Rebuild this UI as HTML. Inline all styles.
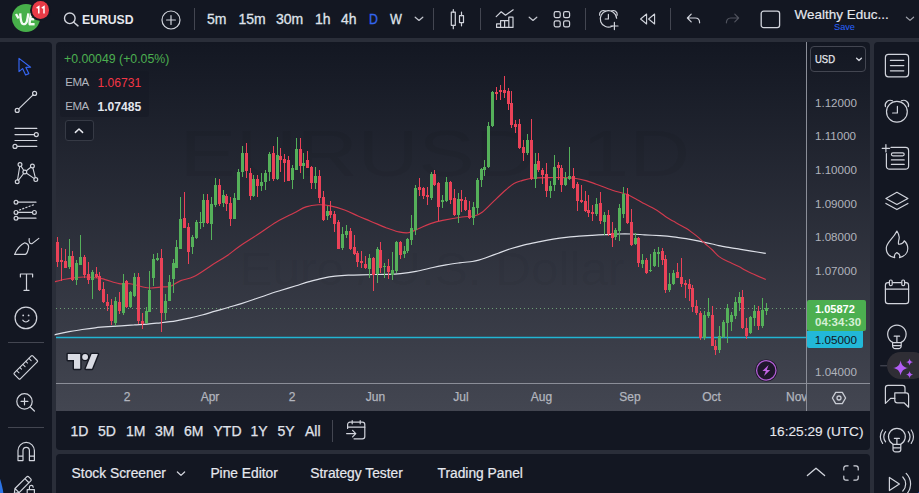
<!DOCTYPE html>
<html>
<head>
<meta charset="utf-8">
<title>EURUSD chart</title>
<style>
html,body{margin:0;padding:0;}
body{width:919px;height:493px;overflow:hidden;background:#2a2e39;font-family:"Liberation Sans",sans-serif;color:#d1d4dc;position:relative;}
.abs{position:absolute;}
.panel{position:absolute;background:#131722;}
.t{position:absolute;white-space:nowrap;line-height:1;}
svg{position:absolute;overflow:visible;}
.ic{fill:none;stroke:#d1d4dc;stroke-width:1.2;stroke-linecap:round;stroke-linejoin:round;}

.pa{font-size:11.6px;color:#b0b3bc;margin-top:-0.3px;}
.ta{top:391px;font-size:12px;color:#b2b5be;-webkit-text-stroke:0.25px #b2b5be;transform:translateX(-50%);}
.dr{top:424px;font-size:14px;color:#e0e3eb;-webkit-text-stroke:0.25px #e0e3eb;}
.bp{top:467px;font-size:13.8px;color:#e6e8ee;-webkit-text-stroke:0.2px #e6e8ee;}
.tf{-webkit-text-stroke:0.3px;color:#dfe2ea;}
</style>
</head>
<body>
<!-- ===== TOP TOOLBAR ===== -->
<div class="panel" id="top" style="left:0;top:0;width:919px;height:38px;"></div>
<!-- ===== LEFT TOOLBAR ===== -->
<div class="panel" id="left" style="left:0;top:42px;width:52px;height:451px;border-top-right-radius:4px;"></div>
<!-- ===== RIGHT TOOLBAR ===== -->
<div class="panel" id="right" style="left:874px;top:42px;width:45px;height:451px;border-top-left-radius:4px;"></div>
<!-- ===== CHART ===== -->
<div class="abs" id="chart" style="left:56px;top:42px;width:814px;height:369px;background:linear-gradient(180deg,#131722 0%,#434651 100%);border-radius:4px 4px 0 0;"></div>
<!-- ===== DATE RANGE BAR ===== -->
<div class="panel" id="range" style="left:56px;top:411px;width:814px;height:38.6px;border-radius:0 0 4px 4px;"></div>
<!-- ===== BOTTOM PANEL ===== -->
<div class="panel" id="bottom" style="left:56px;top:454px;width:814px;height:39px;border-radius:4px 4px 0 0;"></div>


<!-- top toolbar content -->
<div class="abs" style="left:12px;top:4px;width:28px;height:28px;border-radius:50%;background:#47b04a;"></div>
<svg width="28" height="28" viewBox="0 0 28 28" style="left:12px;top:4px;">
  <g fill="none" stroke="#f4fbf4" stroke-width="2.4" stroke-linecap="butt" stroke-linejoin="round">
    <path d="M4 10 L6.6 14.4"/>
    <path d="M8.2 9.4 C8.4 14 8.6 18.6 10.6 19.8 C12.6 20.8 14.4 19.6 15 17 C15.6 14.6 16 12 16.4 9.4"/>
    <path d="M19.4 9.4 C18.4 13 17.4 17 17.6 20.6"/>
    <path d="M18.6 10.4 H23.4"/>
    <path d="M17.8 15.2 H22.2"/>
    <path d="M17 20.2 H22.6"/>
  </g>
</svg>
<div class="abs" style="left:30px;top:-0.5px;width:21px;height:21px;border-radius:50%;background:#131722;"></div>
<div class="abs" style="left:31.8px;top:1.2px;width:17.6px;height:17.6px;border-radius:50%;background:#e83b46;"></div>
<svg width="18" height="18" viewBox="0 0 18 18" style="left:31.8px;top:1.2px;">
  <path d="M4.6 7.2 L6.8 5.6 V12.6 M9.8 7.2 L12 5.6 V12.6" fill="none" stroke="#fff" stroke-width="1.5" stroke-linejoin="miter"/>
</svg>

<svg width="20" height="20" viewBox="0 0 20 20" style="left:61px;top:9px;">
  <circle cx="8.8" cy="9.3" r="5.3" class="ic" style="stroke-width:1.4"/>
  <path d="M12.7 13.2 L17 16.9" class="ic" style="stroke-width:1.4"/>
</svg>
<div class="t" id="sym" style="left:82.3px;top:12.7px;font-size:13.5px;font-weight:bold;color:#e6e8ee;transform:scaleX(0.905);transform-origin:0 0;">EURUSD</div>
<svg width="22" height="22" viewBox="0 0 22 22" style="left:159.5px;top:8.5px;">
  <circle cx="11" cy="11" r="9" class="ic" style="stroke-width:1.2"/>
  <path d="M11 6.6 V15.4 M6.6 11 H15.4" class="ic" style="stroke-width:1.2"/>
</svg>
<div class="abs sep" style="left:194px;top:8px;width:1px;height:22px;background:#434651;"></div>
<div class="t tf" style="left:207px;top:12px;font-size:14px;">5m</div>
<div class="t tf" style="left:238.5px;top:12px;font-size:14px;">15m</div>
<div class="t tf" style="left:276px;top:12px;font-size:14px;">30m</div>
<div class="t tf" style="left:315px;top:12px;font-size:14px;">1h</div>
<div class="t tf" style="left:341px;top:12px;font-size:14px;">4h</div>
<div class="t tf" style="left:368.7px;top:12px;font-size:14px;color:#3366f0;transform:scaleX(0.88);transform-origin:0 0;">D</div>
<div class="t tf" style="left:389.7px;top:12px;font-size:14px;transform:scaleX(0.9);transform-origin:0 0;">W</div>
<svg width="12" height="8" viewBox="0 0 12 8" style="left:412.5px;top:14.5px;"><path d="M2.2 2.2 L6 5.4 L9.8 2.2" class="ic" style="stroke-width:1.25;stroke:#c3c6ce"/></svg>
<div class="abs sep" style="left:433px;top:8px;width:1px;height:22px;background:#434651;"></div>
<!-- candles icon -->
<svg width="20" height="24" viewBox="0 0 20 24" style="left:447px;top:7px;">
  <path d="M6.3 2.6 V5.2 M6.3 18.3 V21.7 M14.5 5.2 V8.7 M14.5 15.6 V18.8" class="ic" style="stroke-width:1.2"/>
  <rect x="4.3" y="5.2" width="4" height="13.1" class="ic" style="stroke-width:1.2"/>
  <rect x="12.5" y="8.7" width="4" height="6.9" class="ic" style="stroke-width:1.2"/>
</svg>
<div class="abs sep" style="left:480px;top:8px;width:1px;height:22px;background:#434651;"></div>
<!-- indicators icon -->
<svg width="22" height="22" viewBox="0 0 22 22" style="left:494px;top:8px;">
  <path d="M2.2 8.6 L7.2 3.8 L11.5 7.2 L19.2 1.8" class="ic" style="stroke-width:1.2"/>
  <path d="M2.6 19.4 H19 V9.2 H14.8 V19.4 M14.8 12.6 H10.6 V19.4 M10.6 12.6 H6.6 V19.4 M6.6 15.8 H2.6 V19.4" class="ic" style="stroke-width:1.2"/>
</svg>
<svg width="12" height="8" viewBox="0 0 12 8" style="left:527px;top:14.5px;"><path d="M2.2 2.2 L6 5.4 L9.8 2.2" class="ic" style="stroke-width:1.25;stroke:#c3c6ce"/></svg>
<!-- layout icon -->
<svg width="20" height="20" viewBox="0 0 20 20" style="left:553px;top:10px;">
  <rect x="1.2" y="1.6" width="6" height="6" rx="1.6" class="ic" style="stroke-width:1.2"/>
  <rect x="10.6" y="1.6" width="6" height="6" rx="1.6" class="ic" style="stroke-width:1.2"/>
  <rect x="1.2" y="10.8" width="6" height="6" rx="1.6" class="ic" style="stroke-width:1.2"/>
  <rect x="10.6" y="10.8" width="6" height="6" rx="1.6" class="ic" style="stroke-width:1.2"/>
</svg>
<div class="abs sep" style="left:585px;top:8px;width:1px;height:22px;background:#434651;"></div>
<!-- alert icon -->
<svg width="24" height="24" viewBox="0 0 24 24" style="left:597px;top:7px;">
  <path d="M15.2 19.2 A8.2 8.2 0 1 1 19.6 11.2" class="ic" style="stroke-width:1.2"/>
  <path d="M11.4 7.4 V12 H8.2" class="ic" style="stroke-width:1.2"/>
  <path d="M2.6 8.2 A4 4 0 0 1 8.4 4 M14.4 4 A4 4 0 0 1 20.2 8.2" class="ic" style="stroke-width:1.2"/>
  <path d="M17.4 15.4 V22.6 M13.8 19 H21" class="ic" style="stroke-width:1.2"/>
</svg>
<!-- replay icon -->
<svg width="18" height="14" viewBox="0 0 18 14" style="left:639px;top:12px;">
  <path d="M7.6 2 V12 L1.6 7 Z M15.6 2 V12 L9.6 7 Z" class="ic" style="stroke-width:1.1"/>
</svg>
<div class="abs sep" style="left:670px;top:8px;width:1px;height:22px;background:#434651;"></div>
<!-- undo / redo -->
<svg width="16" height="12" viewBox="0 0 16 12" style="left:686px;top:13px;">
  <path d="M5.2 1.2 L1.4 5 L5.2 8.8 M1.6 5 H9.2 C12.2 5 13.6 7 13.6 9.8" class="ic" style="stroke-width:1.2"/>
</svg>
<svg width="16" height="12" viewBox="0 0 16 12" style="left:723.5px;top:13px;">
  <path d="M10.8 1.2 L14.6 5 L10.8 8.8 M14.4 5 H6.8 C3.8 5 2.4 7 2.4 9.8" class="ic" style="stroke:#50535e;stroke-width:1.2"/>
</svg>
<!-- save square -->
<svg width="22" height="20" viewBox="0 0 22 20" style="left:760px;top:10px;">
  <rect x="1.2" y="1.2" width="18.4" height="16.4" rx="2.4" class="ic" style="stroke-width:1.3"/>
</svg>
<div class="t" id="wealthy" style="left:794.5px;top:7.5px;font-size:13.5px;color:#e6e8ee;-webkit-text-stroke:0.15px #e6e8ee;">Wealthy Educ...</div>
<div class="t" id="save" style="left:834px;top:22.5px;font-size:9.2px;color:#2962ff;">Save</div>
<svg width="12" height="8" viewBox="0 0 12 8" style="left:904px;top:15px;"><path d="M2.4 2.2 L6 5.4 L9.6 2.2" class="ic" style="stroke-width:1.2;stroke:#9da0a9"/></svg>


<!-- left toolbar icons (page coords) -->
<svg id="leftsvg" width="56" height="493" viewBox="0 0 56 493" style="left:0;top:0;">
  <!-- cursor -->
  <path d="M19 58.4 V71.6 L22.6 68.6 L25.6 75 L28.8 73.6 L25.9 67.4 L30.6 67.2 Z" class="ic" style="stroke:#3567f5;stroke-width:1.15"/>
  <!-- trend line -->
  <circle cx="34.6" cy="93.4" r="2" class="ic"/><circle cx="17.2" cy="110.4" r="2" class="ic"/>
  <path d="M18.7 108.9 L33.1 94.9" class="ic"/>
  <!-- fib lines -->
  <path d="M15 128.4 H36.8 M15 134.6 H34.2 M15 140.5 H36.8 M17.2 146.4 H36.8" class="ic"/>
  <circle cx="36.3" cy="134.6" r="2" class="ic" style="fill:#131722"/><circle cx="15" cy="146.4" r="2" class="ic" style="fill:#131722"/>
  <!-- pattern -->
  <path d="M17.2 181.8 L20 164.6 L24.8 172 L32.4 166 L35.8 179.6 L24.8 172 Z" class="ic" style="stroke-width:1.1"/>
  <circle cx="20" cy="164.6" r="1.9" class="ic" style="fill:#131722"/><circle cx="32.4" cy="166" r="1.9" class="ic" style="fill:#131722"/>
  <circle cx="24.8" cy="172" r="1.9" class="ic" style="fill:#131722"/><circle cx="17.2" cy="181.8" r="1.9" class="ic" style="fill:#131722"/>
  <circle cx="35.8" cy="179.6" r="1.9" class="ic" style="fill:#131722"/>
  <!-- forecast -->
  <path d="M18 202.2 H36 M18 212.4 H32.4 M18 218.2 H36" class="ic"/>
  <path d="M19.5 210 L33.5 204.8" class="ic" style="stroke-dasharray:1.2,2.2"/>
  <circle cx="16" cy="202.2" r="1.9" class="ic"/><circle cx="16" cy="212.4" r="1.9" class="ic"/><circle cx="16" cy="218.2" r="1.9" class="ic"/>
  <circle cx="34.4" cy="212.4" r="1.9" class="ic"/>
  <!-- brush -->
  <path d="M14.6 254.4 C17 249 20.5 244.6 24.8 242.8 C27.6 243.4 28.8 245 28.6 247.4 C28 251 27 253.8 25.4 254.4 Z" class="ic"/>
  <path d="M29.2 238.6 C28.6 242.4 30.2 244.6 32.4 243.4 L38.8 238.4" class="ic"/>
  <!-- text T -->
  <path d="M20.4 277 V274 H32.6 V277 M26.5 274 V290.4 M24 290.4 H29" class="ic"/>
  <!-- smiley -->
  <circle cx="25.9" cy="317.9" r="10.8" class="ic"/>
  <circle cx="23.2" cy="315.4" r="0.9" fill="#d1d4dc"/><circle cx="28.6" cy="315.4" r="0.9" fill="#d1d4dc"/>
  <path d="M22.8 320.2 C24.4 322.6 27.4 322.6 29 320.2" class="ic"/>
  <path d="M8 342.5 H44" stroke="#434651" stroke-width="1"/>
  <!-- ruler -->
  <g transform="translate(25.8,367.4) rotate(-45)">
    <rect x="-13" y="-4.2" width="26" height="8.4" rx="1" class="ic"/>
    <path d="M-8.6 -4.2 V-1 M-4.3 -4.2 V-1.8 M0 -4.2 V-1 M4.3 -4.2 V-1.8 M8.6 -4.2 V-1" class="ic" style="stroke-width:1"/>
  </g>
  <!-- zoom -->
  <circle cx="24.5" cy="401.4" r="7.7" class="ic"/>
  <path d="M30.2 407 L34.4 411 M24.5 398 V404.8 M21.1 401.4 H27.9" class="ic"/>
  <path d="M8 427.5 H44" stroke="#434651" stroke-width="1"/>
  <!-- magnet -->
  <path d="M18 460.6 V450.6 A8.2 8.2 0 0 1 34.4 450.6 V460.6 H29.4 V450.6 A3.2 3.2 0 0 0 23 450.6 V460.6 Z M18 456.2 H23 M29.4 456.2 H34.4" class="ic"/>
  <!-- pencil + lock -->
  <g transform="translate(22.4,485.2) rotate(-45)">
    <path d="M-11.4 0 L-7.6 -2.9 H8.6 A1.8 1.8 0 0 1 10.4 -1.1 V1.1 A1.8 1.8 0 0 1 8.6 2.9 H-7.6 Z M6.4 -2.9 V2.9 M-7.6 -2.9 V2.9" class="ic"/>
  </g>
  <rect x="26" y="487.6" width="10" height="7" fill="#131722"/>
  <path d="M27.2 493.4 V489.6 H34.4 V493.4 M29.4 489.6 V487.4 A1.9 1.9 0 0 1 33.2 487.2" class="ic"/>
  <!-- blue arc -->
  <circle cx="-80" cy="505" r="84.2" fill="#2c74e6"/>
</svg>


<!-- right toolbar icons (page coords) -->
<div class="abs" style="left:887px;top:352px;width:40px;height:27px;border-radius:13.5px;background:#2f2e35;"></div>
<svg id="rightsvg" width="919" height="493" viewBox="0 0 919 493" style="left:0;top:0;">
  <!-- watchlist -->
  <rect x="885.4" y="54.4" width="23.2" height="22.4" rx="3" class="ic"/>
  <path d="M890.4 60.4 H903.8 M890.4 65.6 H903.8 M890.4 70.8 H903.8" class="ic"/>
  <!-- alarm -->
  <circle cx="896.9" cy="111.8" r="10.4" class="ic"/>
  <path d="M897.4 106.4 V113 H892.6" class="ic"/>
  <path d="M885.4 106.6 A5 5 0 0 1 892.4 100.8 M901.4 100.8 A5 5 0 0 1 908.4 106.6" class="ic"/>
  <!-- list plus -->
  <path d="M891 147.4 H905.6 A3 3 0 0 1 908.6 150.4 V166.2 A3 3 0 0 1 905.6 169.2 H889.4 A3 3 0 0 1 886.4 166.2 V153.6" class="ic"/>
  <path d="M885.9 144.6 V152 M882.2 148.3 H889.6" class="ic"/>
  <rect x="891.4" y="152.8" width="12.8" height="3" rx="1.5" class="ic"/>
  <path d="M891.4 159.9 H904.2 M891.4 164.4 H904.2" class="ic"/>
  <!-- layers -->
  <path d="M885.9 198.4 L896.9 192.3 L907.9 198.4 L896.9 204.5 Z" class="ic"/>
  <path d="M885.9 203.4 L896.9 209.6 L907.9 203.4" class="ic"/>
  <!-- flame -->
  <path d="M896.9 231 C898.6 233.6 899.6 236.2 899.1 238.6 C898.8 240.6 898 242.4 898.6 244.2 C901 244.4 903.4 243 904.3 240.8 C906.6 243 907.8 245.6 907.8 248.5 C907.8 252.6 904.6 256.4 899.5 257.7 C900.4 255.6 899 253.6 896.9 252.6 C895 253.8 894 255.8 894.7 257.7 C889.6 256.6 886.2 253 886.3 248 C886.4 242.6 893.4 238.6 896.9 231 Z" class="ic"/>
  <!-- calendar -->
  <rect x="885.4" y="282.6" width="23.2" height="21" rx="2.6" class="ic"/>
  <path d="M885.4 289.2 H908.6" class="ic"/>
  <rect x="889.4" y="280" width="2.8" height="5.6" rx="1.2" class="ic" style="fill:#131722"/>
  <rect x="901.8" y="280" width="2.8" height="5.6" rx="1.2" class="ic" style="fill:#131722"/>
  <!-- bulb -->
  <path d="M892.6 342.4 A9.2 9.2 0 1 1 901.2 342.4" class="ic"/>
  <path d="M892.6 342.6 H901.2 V346 A2.6 2.6 0 0 1 898.6 348.6 H895.2 A2.6 2.6 0 0 1 892.6 346 Z M892.6 345.6 H901.2" class="ic"/>
  <path d="M894.2 336.2 H899.6 M896.9 336.2 V342.4" class="ic"/>
  <!-- sparkle -->
  <path d="M880.2 365.8 H887" style="stroke:#50535e;stroke-width:1;fill:none"/>
  <path d="M900.6 360.4 C901.4 365 903.6 367.2 908.2 368 C903.6 368.8 901.4 371 900.6 375.6 C899.8 371 897.6 368.8 893 368 C897.6 367.2 899.8 365 900.6 360.4 Z" fill="#b15cf5"/>
  <path d="M909.6 358.4 C910 360.6 911 361.6 913.2 362 C911 362.4 910 363.4 909.6 365.6 C909.2 363.4 908.2 362.4 906 362 C908.2 361.6 909.2 360.6 909.6 358.4 Z" fill="#b15cf5"/>
  <path d="M909.6 371 C910 373.2 911 374.2 913.2 374.6 C911 375 910 376 909.6 378.2 C909.2 376 908.2 375 906 374.6 C908.2 374.2 909.2 373.2 909.6 371 Z" fill="#b15cf5"/>
  <!-- chat -->
  <path d="M905 392.6 V388 A2.6 2.6 0 0 0 902.4 385.4 H888 A2.6 2.6 0 0 0 885.4 388 V403.4 L890.6 398.4 H894.8" class="ic"/>
  <path d="M894.8 392.8 H906 A2.6 2.6 0 0 1 908.6 395.4 V407.2 L904 402.8 H897.4 A2.6 2.6 0 0 1 894.8 400.2 Z" class="ic"/>
  <!-- bulb with signal -->
  <path d="M893 444.2 A8.4 8.4 0 1 1 900.8 444.2" class="ic"/>
  <path d="M893 444.4 H900.8 V449.4 A2.4 2.4 0 0 1 898.4 451.8 H895.4 A2.4 2.4 0 0 1 893 449.4 Z M893 447.8 H900.8" class="ic"/>
  <path d="M894.4 438.4 H899.4 M896.9 438.4 V444" class="ic"/>
  <path d="M885.6 431.6 A8 8 0 0 0 885.6 441.8 M882.6 430 A11 11 0 0 0 882.6 443.4 M908.2 431.6 A8 8 0 0 1 908.2 441.8 M911.2 430 A11 11 0 0 1 911.2 443.4" class="ic"/>
  <!-- play with waves -->
  <path d="M889.4 477.4 V490.6 L899.4 484 Z" class="ic"/>
  <path d="M902.8 477 A10 10 0 0 1 902.8 491 M906.2 473.4 A15 15 0 0 1 906.2 494.6" class="ic"/>
  <circle cx="925" cy="500" r="10" fill="#1e53e5"/>
</svg>

<!-- chart svg overlay in page coordinates -->
<svg id="chartsvg" width="919" height="493" viewBox="0 0 919 493" style="left:0;top:0;">
  <!-- watermark -->
  <g fill="#000" fill-opacity="0.05" font-family="Liberation Sans, sans-serif" text-anchor="middle">
    <text x="435" y="176" font-size="64" textLength="510" lengthAdjust="spacingAndGlyphs">EURUSD, 1D</text>
    <text x="432" y="284.5" font-size="46" textLength="385" lengthAdjust="spacingAndGlyphs">Euro / U.S. Dollar</text>
  </g>
  <!-- price lines -->
  <line x1="56" y1="308.5" x2="806" y2="308.5" stroke="#7db881" stroke-opacity="0.8" stroke-width="1" stroke-dasharray="1,3"/>
  <line x1="56" y1="337.5" x2="806" y2="337.5" stroke="#22b5d3" stroke-width="1.3"/>
  <!-- EMAs -->
  <path d="M55.0 334.5 C55.2 334.5 53.6 334.8 56.0 334.3 C58.4 333.8 64.8 332.5 69.1 331.7 C73.4 330.9 77.8 330.1 82.1 329.5 C86.4 328.9 90.8 328.3 95.2 327.8 C99.6 327.3 103.9 327.0 108.2 326.7 C112.5 326.4 116.9 326.1 121.3 325.8 C125.7 325.5 130.0 325.2 134.3 324.9 C138.7 324.6 143.0 324.5 147.4 324.1 C151.8 323.8 155.7 323.3 160.5 322.8 C165.3 322.3 171.2 321.7 176.0 320.9 C180.8 320.1 184.8 319.2 189.1 318.2 C193.4 317.2 197.8 316.2 202.1 315.0 C206.4 313.8 210.8 312.4 215.2 311.1 C219.5 309.9 223.8 308.8 228.2 307.5 C232.5 306.2 237.0 305.0 241.3 303.6 C245.7 302.2 250.0 300.8 254.3 299.3 C258.6 297.8 263.0 296.2 267.4 294.7 C271.8 293.2 275.7 292.0 280.5 290.5 C285.3 289.0 291.2 287.3 296.0 285.8 C300.8 284.3 304.8 282.9 309.1 281.7 C313.5 280.5 317.8 279.3 322.1 278.4 C326.5 277.5 330.9 276.7 335.2 276.2 C339.5 275.7 343.8 275.4 348.2 275.2 C352.6 275.0 356.9 274.9 361.3 274.8 C365.7 274.7 370.0 274.6 374.3 274.5 C378.6 274.4 383.0 274.4 387.4 274.3 C391.8 274.2 395.7 274.1 400.5 273.6 C405.3 273.1 410.6 272.4 416.0 271.4 C421.4 270.4 428.0 268.6 433.0 267.5 C438.0 266.4 441.7 265.7 446.1 264.9 C450.5 264.1 454.9 263.5 459.2 262.9 C463.5 262.3 468.9 261.9 472.2 261.5 C475.4 261.1 476.5 260.8 478.7 260.2 C480.9 259.6 482.0 259.2 485.3 258.0 C488.6 256.8 494.0 254.8 498.3 253.2 C502.6 251.6 507.0 249.9 511.4 248.5 C515.8 247.1 519.6 246.1 524.4 244.9 C529.2 243.8 535.2 242.6 540.0 241.6 C544.8 240.6 548.8 239.9 553.1 239.2 C557.5 238.5 561.8 237.9 566.1 237.4 C570.5 236.9 574.9 236.4 579.2 236.1 C583.6 235.8 587.9 235.6 592.2 235.3 C596.6 235.1 600.9 234.8 605.3 234.6 C609.6 234.4 613.9 234.1 618.3 234.0 C622.6 233.9 627.0 233.9 631.4 234.0 C635.8 234.1 639.7 234.5 644.5 234.8 C649.3 235.1 655.2 235.4 660.0 235.7 C664.8 236.0 668.8 236.3 673.1 236.8 C677.5 237.3 681.8 238.0 686.1 238.7 C690.5 239.4 694.9 240.2 699.2 241.1 C703.6 242.0 708.9 243.2 712.2 244.0 C715.5 244.8 716.6 245.1 718.8 245.6 C721.0 246.1 722.0 246.2 725.3 246.8 C728.5 247.4 733.9 248.2 738.3 248.9 C742.6 249.6 746.8 250.3 751.4 251.1 C756.0 251.8 763.4 253.0 765.8 253.4" fill="none" stroke="#dcdfe7" stroke-width="1.2" stroke-linejoin="round"/>
  <path d="M55.0 281.6 C56.7 281.2 61.7 280.0 65.0 279.3 C68.3 278.6 71.6 278.0 75.0 277.6 C78.4 277.2 81.0 276.8 85.4 277.0 C89.8 277.2 96.0 277.5 101.6 278.6 C107.2 279.7 114.3 282.8 119.0 283.6 C123.7 284.5 126.2 283.2 130.0 283.7 C133.8 284.2 138.7 286.0 142.0 286.7 C145.3 287.4 146.7 288.0 150.0 288.0 C153.3 288.0 158.6 287.2 162.0 286.9 C165.4 286.6 167.5 287.2 170.6 286.2 C173.7 285.1 176.8 282.2 180.7 280.6 C184.6 279.0 188.7 279.2 194.0 276.6 C199.3 274.0 207.0 268.2 212.4 264.8 C217.8 261.4 222.0 259.1 226.6 256.0 C231.2 252.9 234.9 249.5 240.0 246.0 C245.1 242.5 251.2 238.8 257.3 234.8 C263.4 230.8 270.4 225.6 276.5 222.0 C282.6 218.4 289.1 215.5 294.0 213.0 C298.9 210.5 301.9 208.3 306.0 206.9 C310.1 205.5 314.2 205.0 318.3 204.8 C322.4 204.6 326.0 205.0 330.4 205.9 C334.8 206.8 340.0 208.3 344.6 210.0 C349.2 211.7 353.7 214.1 358.0 216.0 C362.3 217.9 365.8 219.2 370.5 221.2 C375.2 223.1 381.4 225.9 386.0 227.7 C390.6 229.4 394.3 230.8 398.0 231.7 C401.7 232.5 404.9 233.3 408.3 232.8 C411.7 232.3 414.7 230.2 418.4 228.7 C422.1 227.2 426.4 225.0 430.5 223.6 C434.6 222.2 437.4 221.5 442.7 220.4 C447.9 219.3 456.7 217.7 462.0 217.0 C467.3 216.3 471.0 216.8 474.4 216.0 C477.8 215.2 479.1 214.6 482.5 212.0 C485.9 209.4 490.7 204.1 494.6 200.4 C498.5 196.7 502.8 192.6 506.0 189.8 C509.2 187.0 511.3 185.0 514.0 183.5 C516.7 182.0 519.0 181.5 522.0 180.6 C525.0 179.7 527.6 178.7 532.0 178.2 C536.4 177.7 543.2 177.7 548.3 177.6 C553.4 177.5 558.1 177.5 562.5 177.6 C566.9 177.7 570.7 177.7 574.6 178.2 C578.5 178.7 582.4 179.6 586.0 180.6 C589.6 181.6 591.8 182.6 596.2 184.2 C600.6 185.8 607.3 188.5 612.4 190.2 C617.5 191.9 622.5 192.8 626.6 194.3 C630.7 195.8 633.8 197.9 636.7 199.4 C639.6 200.9 641.5 202.2 644.0 203.6 C646.5 205.0 649.3 206.1 652.0 207.6 C654.7 209.1 657.6 210.8 660.0 212.4 C662.4 214.0 664.3 215.8 666.5 217.2 C668.7 218.6 669.8 219.2 673.1 221.1 C676.4 222.9 682.9 226.3 686.1 228.3 C689.4 230.3 690.4 231.3 692.6 232.9 C694.8 234.5 697.0 236.2 699.2 238.1 C701.4 240.0 703.5 242.2 705.7 244.2 C707.9 246.1 710.0 247.8 712.2 249.8 C714.4 251.8 716.6 254.6 718.8 256.4 C721.0 258.1 722.0 258.7 725.3 260.3 C728.5 261.9 735.0 264.6 738.3 266.2 C741.6 267.8 742.7 268.9 744.9 270.1 C747.1 271.3 747.9 271.7 751.4 273.3 C754.9 274.9 763.4 278.5 765.8 279.5" fill="none" stroke="#d23a4e" stroke-width="1.15" stroke-linejoin="round"/>
  <!-- candles -->
  <g shape-rendering="crispEdges">
<rect x="57" y="237.1" width="1" height="29.4" fill="#ea4258"/><rect x="56" y="242.1" width="3" height="20.3" fill="#ea4258"/>
<rect x="61" y="248.2" width="1" height="32.4" fill="#ea4258"/><rect x="60" y="260.4" width="3" height="2.0" fill="#ea4258"/>
<rect x="65" y="249.2" width="1" height="19.2" fill="#ea4258"/><rect x="64" y="261.4" width="3" height="6.1" fill="#ea4258"/>
<rect x="69" y="239.1" width="1" height="29.4" fill="#55b05a"/><rect x="68" y="256.3" width="3" height="11.1" fill="#55b05a"/>
<rect x="72" y="251.2" width="1" height="29.4" fill="#ea4258"/><rect x="71" y="256.3" width="3" height="23.3" fill="#ea4258"/>
<rect x="76" y="260.4" width="1" height="24.3" fill="#55b05a"/><rect x="75" y="263.4" width="3" height="16.2" fill="#55b05a"/>
<rect x="80" y="235.0" width="1" height="30.4" fill="#55b05a"/><rect x="79" y="257.3" width="3" height="8.1" fill="#55b05a"/>
<rect x="84" y="255.3" width="1" height="22.3" fill="#ea4258"/><rect x="83" y="257.3" width="3" height="17.2" fill="#ea4258"/>
<rect x="88" y="262.4" width="1" height="21.3" fill="#ea4258"/><rect x="87" y="273.5" width="3" height="6.1" fill="#ea4258"/>
<rect x="92" y="269.5" width="1" height="29.4" fill="#55b05a"/><rect x="91" y="271.5" width="3" height="8.1" fill="#55b05a"/>
<rect x="96" y="267.4" width="1" height="10.1" fill="#ea4258"/><rect x="95" y="273.5" width="3" height="3.0" fill="#ea4258"/>
<rect x="99" y="271.5" width="1" height="19.2" fill="#ea4258"/><rect x="98" y="275.5" width="3" height="14.2" fill="#ea4258"/>
<rect x="103" y="281.6" width="1" height="21.3" fill="#ea4258"/><rect x="102" y="288.7" width="3" height="13.2" fill="#ea4258"/>
<rect x="107" y="293.8" width="1" height="17.2" fill="#ea4258"/><rect x="106" y="301.9" width="3" height="4.1" fill="#ea4258"/>
<rect x="111" y="298.8" width="1" height="26.3" fill="#ea4258"/><rect x="110" y="304.9" width="3" height="16.2" fill="#ea4258"/>
<rect x="115" y="296.8" width="1" height="29.4" fill="#55b05a"/><rect x="114" y="300.9" width="3" height="22.3" fill="#55b05a"/>
<rect x="119" y="291.9" width="1" height="21.9" fill="#ea4258"/><rect x="118" y="301.6" width="3" height="9.7" fill="#ea4258"/>
<rect x="123" y="273.7" width="1" height="41.4" fill="#55b05a"/><rect x="122" y="283.4" width="3" height="29.2" fill="#55b05a"/>
<rect x="126" y="279.7" width="1" height="28.0" fill="#ea4258"/><rect x="125" y="281.0" width="3" height="25.5" fill="#ea4258"/>
<rect x="130" y="290.7" width="1" height="17.0" fill="#55b05a"/><rect x="129" y="291.9" width="3" height="14.6" fill="#55b05a"/>
<rect x="134" y="272.5" width="1" height="24.3" fill="#55b05a"/><rect x="133" y="276.6" width="3" height="19.3" fill="#55b05a"/>
<rect x="138" y="272.5" width="1" height="51.7" fill="#ea4258"/><rect x="137" y="276.6" width="3" height="44.6" fill="#ea4258"/>
<rect x="142" y="313.1" width="1" height="16.2" fill="#ea4258"/><rect x="141" y="321.2" width="3" height="3.0" fill="#ea4258"/>
<rect x="146" y="307.0" width="1" height="17.2" fill="#55b05a"/><rect x="145" y="311.1" width="3" height="12.2" fill="#55b05a"/>
<rect x="149" y="270.5" width="1" height="41.6" fill="#55b05a"/><rect x="148" y="289.8" width="3" height="22.3" fill="#55b05a"/>
<rect x="153" y="254.3" width="1" height="31.4" fill="#55b05a"/><rect x="152" y="259.3" width="3" height="18.3" fill="#55b05a"/>
<rect x="157" y="253.3" width="1" height="8.1" fill="#55b05a"/><rect x="156" y="258.3" width="3" height="2.0" fill="#55b05a"/>
<rect x="161" y="249.2" width="1" height="83.2" fill="#ea4258"/><rect x="160" y="258.3" width="3" height="54.8" fill="#ea4258"/>
<rect x="165" y="293.8" width="1" height="26.4" fill="#55b05a"/><rect x="164" y="300.9" width="3" height="12.2" fill="#55b05a"/>
<rect x="169" y="274.6" width="1" height="26.4" fill="#55b05a"/><rect x="168" y="281.7" width="3" height="19.3" fill="#55b05a"/>
<rect x="173" y="259.3" width="1" height="33.5" fill="#55b05a"/><rect x="172" y="263.4" width="3" height="15.2" fill="#55b05a"/>
<rect x="176" y="240.1" width="1" height="27.4" fill="#55b05a"/><rect x="175" y="247.2" width="3" height="20.3" fill="#55b05a"/>
<rect x="180" y="197.4" width="1" height="51.6" fill="#55b05a"/><rect x="179" y="218.7" width="3" height="30.4" fill="#55b05a"/>
<rect x="184" y="192.3" width="1" height="35.4" fill="#ea4258"/><rect x="183" y="217.7" width="3" height="10.1" fill="#ea4258"/>
<rect x="188" y="222.7" width="1" height="41.5" fill="#ea4258"/><rect x="187" y="226.8" width="3" height="25.3" fill="#ea4258"/>
<rect x="192" y="234.9" width="1" height="19.2" fill="#55b05a"/><rect x="191" y="236.9" width="3" height="10.1" fill="#55b05a"/>
<rect x="196" y="219.7" width="1" height="19.2" fill="#55b05a"/><rect x="195" y="221.7" width="3" height="16.2" fill="#55b05a"/>
<rect x="200" y="211.6" width="1" height="17.2" fill="#55b05a"/><rect x="199" y="221.7" width="3" height="1.0" fill="#55b05a"/>
<rect x="203" y="194.4" width="1" height="32.4" fill="#55b05a"/><rect x="202" y="200.4" width="3" height="22.3" fill="#55b05a"/>
<rect x="207" y="194.4" width="1" height="29.4" fill="#ea4258"/><rect x="206" y="200.4" width="3" height="22.3" fill="#ea4258"/>
<rect x="211" y="197.4" width="1" height="42.5" fill="#55b05a"/><rect x="210" y="203.5" width="3" height="20.3" fill="#55b05a"/>
<rect x="215" y="178.2" width="1" height="28.4" fill="#55b05a"/><rect x="214" y="185.3" width="3" height="19.2" fill="#55b05a"/>
<rect x="219" y="179.2" width="1" height="26.3" fill="#ea4258"/><rect x="218" y="185.3" width="3" height="18.2" fill="#ea4258"/>
<rect x="223" y="190.3" width="1" height="16.2" fill="#55b05a"/><rect x="222" y="195.4" width="3" height="7.1" fill="#55b05a"/>
<rect x="226" y="194.4" width="1" height="16.2" fill="#ea4258"/><rect x="225" y="196.4" width="3" height="7.1" fill="#ea4258"/>
<rect x="230" y="197.4" width="1" height="28.4" fill="#ea4258"/><rect x="229" y="202.5" width="3" height="16.2" fill="#ea4258"/>
<rect x="234" y="193.4" width="1" height="25.3" fill="#55b05a"/><rect x="233" y="198.4" width="3" height="20.3" fill="#55b05a"/>
<rect x="238" y="169.4" width="1" height="30.4" fill="#55b05a"/><rect x="237" y="171.5" width="3" height="28.4" fill="#55b05a"/>
<rect x="242" y="146.1" width="1" height="30.4" fill="#55b05a"/><rect x="241" y="153.2" width="3" height="19.2" fill="#55b05a"/>
<rect x="246" y="143.1" width="1" height="34.4" fill="#ea4258"/><rect x="245" y="153.2" width="3" height="18.2" fill="#ea4258"/>
<rect x="250" y="168.4" width="1" height="31.4" fill="#ea4258"/><rect x="249" y="172.5" width="3" height="23.3" fill="#ea4258"/>
<rect x="253" y="174.5" width="1" height="22.3" fill="#55b05a"/><rect x="252" y="178.5" width="3" height="17.2" fill="#55b05a"/>
<rect x="257" y="174.5" width="1" height="22.3" fill="#ea4258"/><rect x="256" y="178.5" width="3" height="7.1" fill="#ea4258"/>
<rect x="261" y="172.5" width="1" height="18.2" fill="#55b05a"/><rect x="260" y="181.6" width="3" height="4.1" fill="#55b05a"/>
<rect x="265" y="170.4" width="1" height="19.2" fill="#55b05a"/><rect x="264" y="172.5" width="3" height="9.1" fill="#55b05a"/>
<rect x="269" y="152.2" width="1" height="28.4" fill="#55b05a"/><rect x="268" y="154.2" width="3" height="18.2" fill="#55b05a"/>
<rect x="273" y="146.1" width="1" height="34.4" fill="#ea4258"/><rect x="272" y="153.2" width="3" height="25.3" fill="#ea4258"/>
<rect x="277" y="137.0" width="1" height="42.5" fill="#55b05a"/><rect x="276" y="155.3" width="3" height="23.3" fill="#55b05a"/>
<rect x="280" y="148.2" width="1" height="23.3" fill="#ea4258"/><rect x="279" y="156.3" width="3" height="4.1" fill="#ea4258"/>
<rect x="284" y="154.2" width="1" height="27.3" fill="#ea4258"/><rect x="283" y="159.3" width="3" height="4.1" fill="#ea4258"/>
<rect x="288" y="156.3" width="1" height="24.3" fill="#ea4258"/><rect x="287" y="160.3" width="3" height="20.3" fill="#ea4258"/>
<rect x="292" y="165.4" width="1" height="23.3" fill="#55b05a"/><rect x="291" y="168.4" width="3" height="11.1" fill="#55b05a"/>
<rect x="296" y="138.0" width="1" height="32.4" fill="#55b05a"/><rect x="295" y="149.2" width="3" height="20.3" fill="#55b05a"/>
<rect x="300" y="138.0" width="1" height="35.4" fill="#ea4258"/><rect x="299" y="149.2" width="3" height="17.2" fill="#ea4258"/>
<rect x="303" y="153.2" width="1" height="25.3" fill="#55b05a"/><rect x="302" y="163.4" width="3" height="3.0" fill="#55b05a"/>
<rect x="307" y="151.2" width="1" height="17.2" fill="#ea4258"/><rect x="306" y="160.3" width="3" height="8.1" fill="#ea4258"/>
<rect x="311" y="166.4" width="1" height="22.3" fill="#ea4258"/><rect x="310" y="167.4" width="3" height="15.2" fill="#ea4258"/>
<rect x="315" y="167.4" width="1" height="21.3" fill="#55b05a"/><rect x="314" y="175.5" width="3" height="7.1" fill="#55b05a"/>
<rect x="319" y="170.4" width="1" height="32.4" fill="#ea4258"/><rect x="318" y="175.5" width="3" height="22.3" fill="#ea4258"/>
<rect x="323" y="190.7" width="1" height="30.4" fill="#ea4258"/><rect x="322" y="196.8" width="3" height="23.3" fill="#ea4258"/>
<rect x="327" y="205.9" width="1" height="14.2" fill="#55b05a"/><rect x="326" y="210.9" width="3" height="5.1" fill="#55b05a"/>
<rect x="330" y="200.8" width="1" height="17.2" fill="#ea4258"/><rect x="329" y="210.9" width="3" height="4.1" fill="#ea4258"/>
<rect x="334" y="211.1" width="1" height="21.3" fill="#ea4258"/><rect x="333" y="214.1" width="3" height="10.1" fill="#ea4258"/>
<rect x="338" y="220.2" width="1" height="28.4" fill="#ea4258"/><rect x="337" y="222.2" width="3" height="26.3" fill="#ea4258"/>
<rect x="342" y="227.3" width="1" height="22.3" fill="#55b05a"/><rect x="341" y="234.4" width="3" height="13.2" fill="#55b05a"/>
<rect x="346" y="225.3" width="1" height="12.2" fill="#55b05a"/><rect x="345" y="231.3" width="3" height="4.1" fill="#55b05a"/>
<rect x="350" y="228.3" width="1" height="21.3" fill="#ea4258"/><rect x="349" y="231.3" width="3" height="17.2" fill="#ea4258"/>
<rect x="354" y="235.4" width="1" height="19.2" fill="#ea4258"/><rect x="353" y="246.5" width="3" height="7.1" fill="#ea4258"/>
<rect x="357" y="250.6" width="1" height="16.2" fill="#ea4258"/><rect x="356" y="252.6" width="3" height="9.1" fill="#ea4258"/>
<rect x="361" y="250.6" width="1" height="17.2" fill="#ea4258"/><rect x="360" y="260.7" width="3" height="2.0" fill="#ea4258"/>
<rect x="365" y="255.6" width="1" height="13.2" fill="#ea4258"/><rect x="364" y="263.7" width="3" height="4.1" fill="#ea4258"/>
<rect x="369" y="253.6" width="1" height="24.3" fill="#55b05a"/><rect x="368" y="257.7" width="3" height="11.1" fill="#55b05a"/>
<rect x="373" y="256.6" width="1" height="34.4" fill="#ea4258"/><rect x="372" y="257.7" width="3" height="17.2" fill="#ea4258"/>
<rect x="377" y="246.5" width="1" height="36.5" fill="#55b05a"/><rect x="376" y="248.5" width="3" height="25.3" fill="#55b05a"/>
<rect x="380" y="241.5" width="1" height="31.4" fill="#ea4258"/><rect x="379" y="249.6" width="3" height="18.2" fill="#ea4258"/>
<rect x="384" y="262.7" width="1" height="15.2" fill="#55b05a"/><rect x="383" y="265.8" width="3" height="1.0" fill="#55b05a"/>
<rect x="388" y="258.7" width="1" height="20.3" fill="#ea4258"/><rect x="387" y="265.8" width="3" height="6.1" fill="#ea4258"/>
<rect x="392" y="251.6" width="1" height="28.4" fill="#55b05a"/><rect x="391" y="269.8" width="3" height="5.1" fill="#55b05a"/>
<rect x="396" y="240.9" width="1" height="32.4" fill="#55b05a"/><rect x="395" y="241.9" width="3" height="29.4" fill="#55b05a"/>
<rect x="400" y="240.9" width="1" height="18.2" fill="#ea4258"/><rect x="399" y="241.9" width="3" height="13.2" fill="#ea4258"/>
<rect x="404" y="245.9" width="1" height="12.2" fill="#55b05a"/><rect x="403" y="251.0" width="3" height="3.0" fill="#55b05a"/>
<rect x="407" y="237.8" width="1" height="15.2" fill="#55b05a"/><rect x="406" y="238.9" width="3" height="12.2" fill="#55b05a"/>
<rect x="411" y="214.6" width="1" height="30.4" fill="#55b05a"/><rect x="410" y="227.7" width="3" height="12.2" fill="#55b05a"/>
<rect x="415" y="185.2" width="1" height="49.6" fill="#55b05a"/><rect x="414" y="188.2" width="3" height="41.5" fill="#55b05a"/>
<rect x="419" y="178.1" width="1" height="18.2" fill="#ea4258"/><rect x="418" y="187.2" width="3" height="3.0" fill="#ea4258"/>
<rect x="423" y="187.2" width="1" height="12.2" fill="#ea4258"/><rect x="422" y="188.2" width="3" height="8.1" fill="#ea4258"/>
<rect x="427" y="187.2" width="1" height="18.2" fill="#ea4258"/><rect x="426" y="195.3" width="3" height="2.0" fill="#ea4258"/>
<rect x="431" y="172.0" width="1" height="28.4" fill="#55b05a"/><rect x="430" y="174.1" width="3" height="24.3" fill="#55b05a"/>
<rect x="434" y="170.0" width="1" height="16.2" fill="#ea4258"/><rect x="433" y="174.1" width="3" height="11.1" fill="#ea4258"/>
<rect x="438" y="182.2" width="1" height="38.5" fill="#ea4258"/><rect x="437" y="183.2" width="3" height="23.3" fill="#ea4258"/>
<rect x="442" y="195.3" width="1" height="12.2" fill="#55b05a"/><rect x="441" y="200.4" width="3" height="2.0" fill="#55b05a"/>
<rect x="446" y="177.1" width="1" height="25.3" fill="#55b05a"/><rect x="445" y="182.2" width="3" height="19.2" fill="#55b05a"/>
<rect x="450" y="180.6" width="1" height="23.3" fill="#ea4258"/><rect x="449" y="181.6" width="3" height="18.2" fill="#ea4258"/>
<rect x="454" y="188.7" width="1" height="27.3" fill="#ea4258"/><rect x="453" y="197.8" width="3" height="17.2" fill="#ea4258"/>
<rect x="458" y="192.8" width="1" height="30.4" fill="#55b05a"/><rect x="457" y="198.9" width="3" height="16.2" fill="#55b05a"/>
<rect x="461" y="189.9" width="1" height="21.7" fill="#ea4258"/><rect x="460" y="199.3" width="3" height="2.0" fill="#ea4258"/>
<rect x="465" y="196.8" width="1" height="14.2" fill="#ea4258"/><rect x="464" y="199.9" width="3" height="10.1" fill="#ea4258"/>
<rect x="469" y="200.9" width="1" height="18.2" fill="#ea4258"/><rect x="468" y="210.0" width="3" height="8.1" fill="#ea4258"/>
<rect x="473" y="201.9" width="1" height="23.3" fill="#55b05a"/><rect x="472" y="207.0" width="3" height="11.1" fill="#55b05a"/>
<rect x="477" y="177.6" width="1" height="36.5" fill="#55b05a"/><rect x="476" y="179.6" width="3" height="28.4" fill="#55b05a"/>
<rect x="481" y="167.5" width="1" height="19.2" fill="#55b05a"/><rect x="480" y="168.5" width="3" height="11.1" fill="#55b05a"/>
<rect x="484" y="160.4" width="1" height="15.2" fill="#55b05a"/><rect x="483" y="166.5" width="3" height="3.0" fill="#55b05a"/>
<rect x="488" y="121.6" width="1" height="46.6" fill="#55b05a"/><rect x="487" y="125.7" width="3" height="41.5" fill="#55b05a"/>
<rect x="492" y="91.3" width="1" height="35.4" fill="#55b05a"/><rect x="491" y="92.3" width="3" height="33.4" fill="#55b05a"/>
<rect x="496" y="87.2" width="1" height="13.2" fill="#ea4258"/><rect x="495" y="92.3" width="3" height="2.0" fill="#ea4258"/>
<rect x="500" y="85.2" width="1" height="15.2" fill="#ea4258"/><rect x="499" y="90.3" width="3" height="2.0" fill="#ea4258"/>
<rect x="504" y="76.1" width="1" height="22.3" fill="#ea4258"/><rect x="503" y="90.3" width="3" height="3.0" fill="#ea4258"/>
<rect x="508" y="88.2" width="1" height="21.3" fill="#ea4258"/><rect x="507" y="91.3" width="3" height="12.2" fill="#ea4258"/>
<rect x="511" y="91.3" width="1" height="36.5" fill="#ea4258"/><rect x="510" y="103.4" width="3" height="21.3" fill="#ea4258"/>
<rect x="515" y="119.6" width="1" height="13.2" fill="#ea4258"/><rect x="514" y="123.7" width="3" height="3.0" fill="#ea4258"/>
<rect x="519" y="118.6" width="1" height="30.4" fill="#ea4258"/><rect x="518" y="123.7" width="3" height="24.3" fill="#ea4258"/>
<rect x="523" y="139.9" width="1" height="21.3" fill="#ea4258"/><rect x="522" y="147.0" width="3" height="6.1" fill="#ea4258"/>
<rect x="527" y="134.1" width="1" height="21.3" fill="#55b05a"/><rect x="526" y="140.1" width="3" height="13.2" fill="#55b05a"/>
<rect x="531" y="118.7" width="1" height="61.0" fill="#ea4258"/><rect x="530" y="140.1" width="3" height="38.5" fill="#ea4258"/>
<rect x="535" y="153.3" width="1" height="34.4" fill="#55b05a"/><rect x="534" y="164.4" width="3" height="14.2" fill="#55b05a"/>
<rect x="538" y="153.3" width="1" height="18.2" fill="#ea4258"/><rect x="537" y="161.4" width="3" height="8.1" fill="#ea4258"/>
<rect x="542" y="167.5" width="1" height="16.2" fill="#ea4258"/><rect x="541" y="169.5" width="3" height="5.1" fill="#ea4258"/>
<rect x="546" y="163.4" width="1" height="33.4" fill="#ea4258"/><rect x="545" y="173.5" width="3" height="17.2" fill="#ea4258"/>
<rect x="550" y="180.6" width="1" height="17.2" fill="#55b05a"/><rect x="549" y="185.7" width="3" height="5.1" fill="#55b05a"/>
<rect x="554" y="155.3" width="1" height="35.4" fill="#55b05a"/><rect x="553" y="166.5" width="3" height="18.2" fill="#55b05a"/>
<rect x="558" y="162.4" width="1" height="17.2" fill="#ea4258"/><rect x="557" y="165.4" width="3" height="3.0" fill="#ea4258"/>
<rect x="561" y="165.4" width="1" height="26.3" fill="#ea4258"/><rect x="560" y="167.5" width="3" height="17.2" fill="#ea4258"/>
<rect x="565" y="171.5" width="1" height="14.2" fill="#55b05a"/><rect x="564" y="177.6" width="3" height="7.1" fill="#55b05a"/>
<rect x="569" y="147.2" width="1" height="32.4" fill="#55b05a"/><rect x="568" y="175.6" width="3" height="3.0" fill="#55b05a"/>
<rect x="573" y="167.5" width="1" height="21.3" fill="#ea4258"/><rect x="572" y="175.6" width="3" height="12.2" fill="#ea4258"/>
<rect x="577" y="181.6" width="1" height="29.4" fill="#ea4258"/><rect x="576" y="183.7" width="3" height="17.2" fill="#ea4258"/>
<rect x="581" y="185.2" width="1" height="18.2" fill="#ea4258"/><rect x="580" y="200.4" width="3" height="2.0" fill="#ea4258"/>
<rect x="585" y="191.3" width="1" height="20.3" fill="#ea4258"/><rect x="584" y="201.4" width="3" height="9.1" fill="#ea4258"/>
<rect x="588" y="195.3" width="1" height="21.3" fill="#ea4258"/><rect x="587" y="209.5" width="3" height="3.0" fill="#ea4258"/>
<rect x="592" y="205.4" width="1" height="15.2" fill="#ea4258"/><rect x="591" y="211.5" width="3" height="2.0" fill="#ea4258"/>
<rect x="596" y="198.4" width="1" height="17.2" fill="#55b05a"/><rect x="595" y="204.4" width="3" height="9.1" fill="#55b05a"/>
<rect x="600" y="192.3" width="1" height="31.4" fill="#ea4258"/><rect x="599" y="203.4" width="3" height="17.2" fill="#ea4258"/>
<rect x="604" y="211.5" width="1" height="23.3" fill="#55b05a"/><rect x="603" y="214.6" width="3" height="7.1" fill="#55b05a"/>
<rect x="608" y="209.5" width="1" height="26.3" fill="#ea4258"/><rect x="607" y="214.6" width="3" height="19.2" fill="#ea4258"/>
<rect x="612" y="221.6" width="1" height="25.3" fill="#ea4258"/><rect x="611" y="232.8" width="3" height="5.1" fill="#ea4258"/>
<rect x="615" y="227.7" width="1" height="12.2" fill="#55b05a"/><rect x="614" y="229.7" width="3" height="7.1" fill="#55b05a"/>
<rect x="619" y="204.4" width="1" height="36.5" fill="#55b05a"/><rect x="618" y="207.5" width="3" height="23.3" fill="#55b05a"/>
<rect x="623" y="187.2" width="1" height="30.4" fill="#55b05a"/><rect x="622" y="194.3" width="3" height="19.2" fill="#55b05a"/>
<rect x="627" y="188.2" width="1" height="35.4" fill="#ea4258"/><rect x="626" y="194.3" width="3" height="28.4" fill="#ea4258"/>
<rect x="631" y="208.5" width="1" height="37.5" fill="#ea4258"/><rect x="630" y="221.6" width="3" height="23.3" fill="#ea4258"/>
<rect x="635" y="232.8" width="1" height="12.2" fill="#55b05a"/><rect x="634" y="237.8" width="3" height="6.1" fill="#55b05a"/>
<rect x="638" y="236.8" width="1" height="30.4" fill="#ea4258"/><rect x="637" y="237.8" width="3" height="25.3" fill="#ea4258"/>
<rect x="642" y="254.2" width="1" height="14.2" fill="#55b05a"/><rect x="641" y="260.3" width="3" height="4.1" fill="#55b05a"/>
<rect x="646" y="258.2" width="1" height="16.2" fill="#ea4258"/><rect x="645" y="260.3" width="3" height="12.2" fill="#ea4258"/>
<rect x="650" y="254.2" width="1" height="18.2" fill="#55b05a"/><rect x="649" y="270.0" width="3" height="1.4" fill="#55b05a"/>
<rect x="654" y="249.1" width="1" height="18.2" fill="#55b05a"/><rect x="653" y="252.2" width="3" height="14.2" fill="#55b05a"/>
<rect x="658" y="247.1" width="1" height="20.3" fill="#55b05a"/><rect x="657" y="252.2" width="3" height="2.0" fill="#55b05a"/>
<rect x="662" y="248.1" width="1" height="17.2" fill="#ea4258"/><rect x="661" y="251.1" width="3" height="9.1" fill="#ea4258"/>
<rect x="665" y="255.2" width="1" height="37.5" fill="#ea4258"/><rect x="664" y="259.2" width="3" height="30.4" fill="#ea4258"/>
<rect x="669" y="273.4" width="1" height="18.2" fill="#55b05a"/><rect x="668" y="283.5" width="3" height="6.1" fill="#55b05a"/>
<rect x="673" y="270.4" width="1" height="14.2" fill="#55b05a"/><rect x="672" y="273.4" width="3" height="10.1" fill="#55b05a"/>
<rect x="677" y="263.3" width="1" height="14.2" fill="#ea4258"/><rect x="676" y="272.4" width="3" height="5.1" fill="#ea4258"/>
<rect x="681" y="258.2" width="1" height="28.4" fill="#ea4258"/><rect x="680" y="276.5" width="3" height="7.1" fill="#ea4258"/>
<rect x="685" y="279.5" width="1" height="18.2" fill="#ea4258"/><rect x="684" y="282.5" width="3" height="2.0" fill="#ea4258"/>
<rect x="689" y="278.5" width="1" height="22.3" fill="#ea4258"/><rect x="688" y="283.5" width="3" height="5.1" fill="#ea4258"/>
<rect x="692" y="284.6" width="1" height="27.3" fill="#ea4258"/><rect x="691" y="287.6" width="3" height="19.2" fill="#ea4258"/>
<rect x="696" y="299.7" width="1" height="15.2" fill="#ea4258"/><rect x="695" y="305.8" width="3" height="7.1" fill="#ea4258"/>
<rect x="700" y="310.9" width="1" height="28.9" fill="#ea4258"/><rect x="699" y="312.7" width="3" height="25.3" fill="#ea4258"/>
<rect x="704" y="311.0" width="1" height="28.5" fill="#55b05a"/><rect x="703" y="314.7" width="3" height="23.1" fill="#55b05a"/>
<rect x="708" y="297.9" width="1" height="19.7" fill="#55b05a"/><rect x="707" y="311.8" width="3" height="4.0" fill="#55b05a"/>
<rect x="712" y="306.0" width="1" height="40.4" fill="#ea4258"/><rect x="711" y="314.7" width="3" height="30.8" fill="#ea4258"/>
<rect x="715" y="339.5" width="1" height="15.5" fill="#ea4258"/><rect x="714" y="345.5" width="3" height="4.5" fill="#ea4258"/>
<rect x="719" y="325.8" width="1" height="27.2" fill="#55b05a"/><rect x="718" y="336.0" width="3" height="14.0" fill="#55b05a"/>
<rect x="723" y="320.0" width="1" height="17.8" fill="#55b05a"/><rect x="722" y="321.6" width="3" height="15.4" fill="#55b05a"/>
<rect x="727" y="304.0" width="1" height="39.0" fill="#55b05a"/><rect x="726" y="308.3" width="3" height="14.5" fill="#55b05a"/>
<rect x="731" y="312.2" width="1" height="18.6" fill="#55b05a"/><rect x="730" y="314.8" width="3" height="7.0" fill="#55b05a"/>
<rect x="735" y="297.0" width="1" height="21.9" fill="#55b05a"/><rect x="734" y="301.7" width="3" height="13.8" fill="#55b05a"/>
<rect x="739" y="291.8" width="1" height="18.9" fill="#55b05a"/><rect x="738" y="296.8" width="3" height="5.8" fill="#55b05a"/>
<rect x="742" y="290.0" width="1" height="39.0" fill="#ea4258"/><rect x="741" y="296.8" width="3" height="31.4" fill="#ea4258"/>
<rect x="746" y="318.0" width="1" height="20.6" fill="#ea4258"/><rect x="745" y="328.0" width="3" height="8.0" fill="#ea4258"/>
<rect x="750" y="315.7" width="1" height="18.3" fill="#55b05a"/><rect x="749" y="316.8" width="3" height="16.6" fill="#55b05a"/>
<rect x="754" y="304.8" width="1" height="21.0" fill="#55b05a"/><rect x="753" y="310.6" width="3" height="7.0" fill="#55b05a"/>
<rect x="758" y="306.0" width="1" height="23.8" fill="#ea4258"/><rect x="757" y="310.6" width="3" height="15.2" fill="#ea4258"/>
<rect x="762" y="297.9" width="1" height="29.6" fill="#55b05a"/><rect x="761" y="309.8" width="3" height="16.2" fill="#55b05a"/>
<rect x="766" y="303.0" width="1" height="11.8" fill="#55b05a"/><rect x="765" y="307.8" width="3" height="2.8" fill="#55b05a"/>
  </g>
  <!-- axes borders -->
  <line x1="806.5" y1="42" x2="806.5" y2="411" stroke="#8b8e98" stroke-width="1"/>
  <line x1="56" y1="383.5" x2="870" y2="383.5" stroke="#8b8e98" stroke-width="1"/>
</svg>

<!-- chart overlays -->
<div class="t" id="chg" style="left:64px;top:52.8px;font-size:12.3px;color:#4caf50;">+0.00049 (+0.05%)</div>
<div class="abs" style="left:60px;top:71px;width:89px;height:46px;background:rgba(19,23,34,0.4);border-radius:3px;"></div>
<div class="t" id="ema1" style="left:65.3px;top:77px;font-size:11.5px;letter-spacing:-0.5px;color:#b2b5be;">EMA</div>
<div class="t" id="ema1v" style="left:97.5px;top:77px;font-size:12.1px;color:#f23645;">1.06731</div>
<div class="t" id="ema2" style="left:65.3px;top:101px;font-size:11.5px;letter-spacing:-0.5px;color:#b2b5be;">EMA</div>
<div class="t" id="ema2v" style="left:97.5px;top:101px;font-size:12.1px;color:#e3e6ee;font-weight:bold;">1.07485</div>
<div class="abs" style="left:65px;top:120px;width:27px;height:19px;border:1px solid #363a45;border-radius:3px;background:#171b26;"></div>
<svg width="12" height="8" viewBox="0 0 12 8" style="left:73px;top:126.5px;"><path d="M2.4 5.4 L6 2 L9.6 5.4" class="ic" style="stroke-width:1.5;stroke:#e6e8ee"/></svg>

<!-- USD box -->
<div class="abs" style="left:810px;top:46px;width:54px;height:24px;border:1px solid #434651;border-radius:4px;box-sizing:content-box;"></div>
<div class="t" id="usd" style="left:814.5px;top:53.5px;font-size:11px;color:#e6e8ee;-webkit-text-stroke:0.25px #e6e8ee;transform:scaleX(0.86);transform-origin:0 0;">USD</div>
<svg width="10" height="7" viewBox="0 0 10 7" style="left:853.5px;top:55.5px;"><path d="M2.6 2.2 L5 4.4 L7.4 2.2" class="ic" style="stroke-width:1.4"/></svg>

<!-- price axis labels -->
<div class="t pa" style="left:815px;top:97px;">1.12000</div>
<div class="t pa" style="left:815px;top:130.7px;">1.11000</div>
<div class="t pa" style="left:815px;top:164.3px;">1.10000</div>
<div class="t pa" style="left:815px;top:198px;">1.09000</div>
<div class="t pa" style="left:815px;top:231.6px;">1.08000</div>
<div class="t pa" style="left:815px;top:265.3px;">1.07000</div>
<div class="t pa" style="left:815px;top:298.9px;">1.06000</div>
<div class="t pa" style="left:815px;top:366.2px;">1.04000</div>
<!-- price labels -->
<div class="abs" style="left:807px;top:300px;width:59px;height:31px;background:#4caf50;border-radius:2px;"></div>
<div class="t" id="pl1" style="left:815px;top:304px;font-size:11px;font-weight:bold;color:#fff;">1.05872</div>
<div class="t" id="pl2" style="left:815px;top:317px;font-size:11.5px;font-weight:bold;color:#d5efd6;">04:34:30</div>
<div class="abs" style="left:807px;top:331px;width:55.5px;height:16.5px;background:#22b8d8;border-radius:0 0 2px 2px;"></div>
<div class="t" id="pl3" style="left:814.7px;top:333.8px;font-size:11.7px;color:#131722;">1.05000</div>

<!-- time axis labels -->
<div class="t ta" style="left:127px;">2</div>
<div class="t ta" style="left:210px;">Apr</div>
<div class="t ta" style="left:292px;">2</div>
<div class="t ta" style="left:375.5px;">Jun</div>
<div class="t ta" style="left:461px;">Jul</div>
<div class="t ta" style="left:541.5px;">Aug</div>
<div class="t ta" style="left:630px;">Sep</div>
<div class="t ta" style="left:711.5px;">Oct</div>
<div class="abs" style="left:780px;top:385px;width:26px;height:25px;overflow:hidden;"><div class="t" style="left:6px;top:6px;font-size:12px;color:#b2b5be;-webkit-text-stroke:0.25px #b2b5be;">Nov</div></div>
<!-- settings hexagon -->
<svg width="18" height="18" viewBox="0 0 18 18" style="left:830px;top:389px;">
  <path d="M5.7 3.3 H12.3 L15.6 9 L12.3 14.7 H5.7 L2.4 9 Z" class="ic" style="stroke-width:1.3;stroke:#c9ccd4"/>
  <circle cx="9" cy="9" r="2" class="ic" style="stroke-width:1.3;stroke:#c9ccd4"/>
</svg>
<!-- TV logo -->
<svg width="919" height="493" viewBox="0 0 919 493" style="left:0;top:0;">
  <g fill="#d9dbe3" stroke="#161923" stroke-width="2.8" stroke-linejoin="round" paint-order="stroke">
    <path d="M67.8 354.1 H80.2 V368.8 H74 V360 H67.8 Z"/>
    <circle cx="85.1" cy="357" r="2.9"/>
    <path d="M91.6 354.1 H97.9 L92 368.8 H85.7 Z"/>
  </g>
</svg>
<!-- lightning -->
<svg width="24" height="24" viewBox="0 0 24 24" style="left:754px;top:359px;">
  <circle cx="12.3" cy="11.4" r="11" fill="#1b1426"/><circle cx="12.3" cy="11.4" r="9.7" fill="#1e172b" stroke="#b15fd4" stroke-width="1.3"/>
  <path d="M14.6 6 L8.4 11.9 H11.8 L10 17 L16.2 11 H12.8 Z" fill="#c063e2"/>
</svg>

<!-- date range bar -->
<div class="t dr" style="left:70.5px;">1D</div>
<div class="t dr" style="left:98px;">5D</div>
<div class="t dr" style="left:126px;">1M</div>
<div class="t dr" style="left:155px;">3M</div>
<div class="t dr" style="left:184px;">6M</div>
<div class="t dr" style="left:213.5px;">YTD</div>
<div class="t dr" style="left:250.5px;">1Y</div>
<div class="t dr" style="left:277.5px;">5Y</div>
<div class="t dr" style="left:305px;">All</div>
<div class="abs" style="left:332px;top:420px;width:1px;height:22px;background:#434651;"></div>
<svg width="22" height="22" viewBox="0 0 22 22" style="left:345px;top:419px;">
  <path d="M2.6 9.4 V5.6 A2.4 2.4 0 0 1 5 3.2 H17.4 A2.4 2.4 0 0 1 19.8 5.6 V17.4 A2.4 2.4 0 0 1 17.400 19.8 H9" class="ic"/>
  <path d="M2.6 8.2 H19.8 M7.2 1.6 V4.8 M15.2 1.6 V4.8" class="ic"/>
  <path d="M1.6 14.6 H10.6 M7.6 11.4 L10.8 14.6 L7.6 17.8" class="ic"/>
</svg>
<div class="t" id="utc" style="left:769.5px;top:425px;font-size:13.65px;color:#e6e8ee;-webkit-text-stroke:0.12px #e6e8ee;">16:25:29 (UTC)</div>

<!-- bottom panel -->
<div class="t bp" id="bp1" style="left:71.6px;">Stock Screener</div>
<svg width="12" height="8" viewBox="0 0 12 8" style="left:174.5px;top:470px;"><path d="M2.4 2 L6 5.4 L9.6 2" class="ic" style="stroke-width:1.3"/></svg>
<div class="t bp" id="bp2" style="left:210.4px;">Pine Editor</div>
<div class="t bp" id="bp3" style="left:310.3px;">Strategy Tester</div>
<div class="t bp" id="bp4" style="left:437.5px;">Trading Panel</div>
<svg width="22" height="12" viewBox="0 0 22 12" style="left:804.5px;top:466px;"><path d="M2.4 9.6 L11 2.2 L19.6 9.6" class="ic" style="stroke-width:1.3"/></svg>
<svg width="20" height="20" viewBox="0 0 20 20" style="left:842px;top:464px;transform:scale(0.9);transform-origin:0 0;">
  <path d="M2 6.6 V4.4 A2.4 2.4 0 0 1 4.4 2 H6.8 M13.200 2 H15.6 A2.4 2.4 0 0 1 18 4.4 V6.6 M18 13.4 V15.6 A2.4 2.4 0 0 1 15.6 18 H13.2 M6.8 18 H4.4 A2.4 2.4 0 0 1 2 15.6 V13.4" class="ic" style="stroke-width:1.3"/>
</svg>
</body>
</html>
